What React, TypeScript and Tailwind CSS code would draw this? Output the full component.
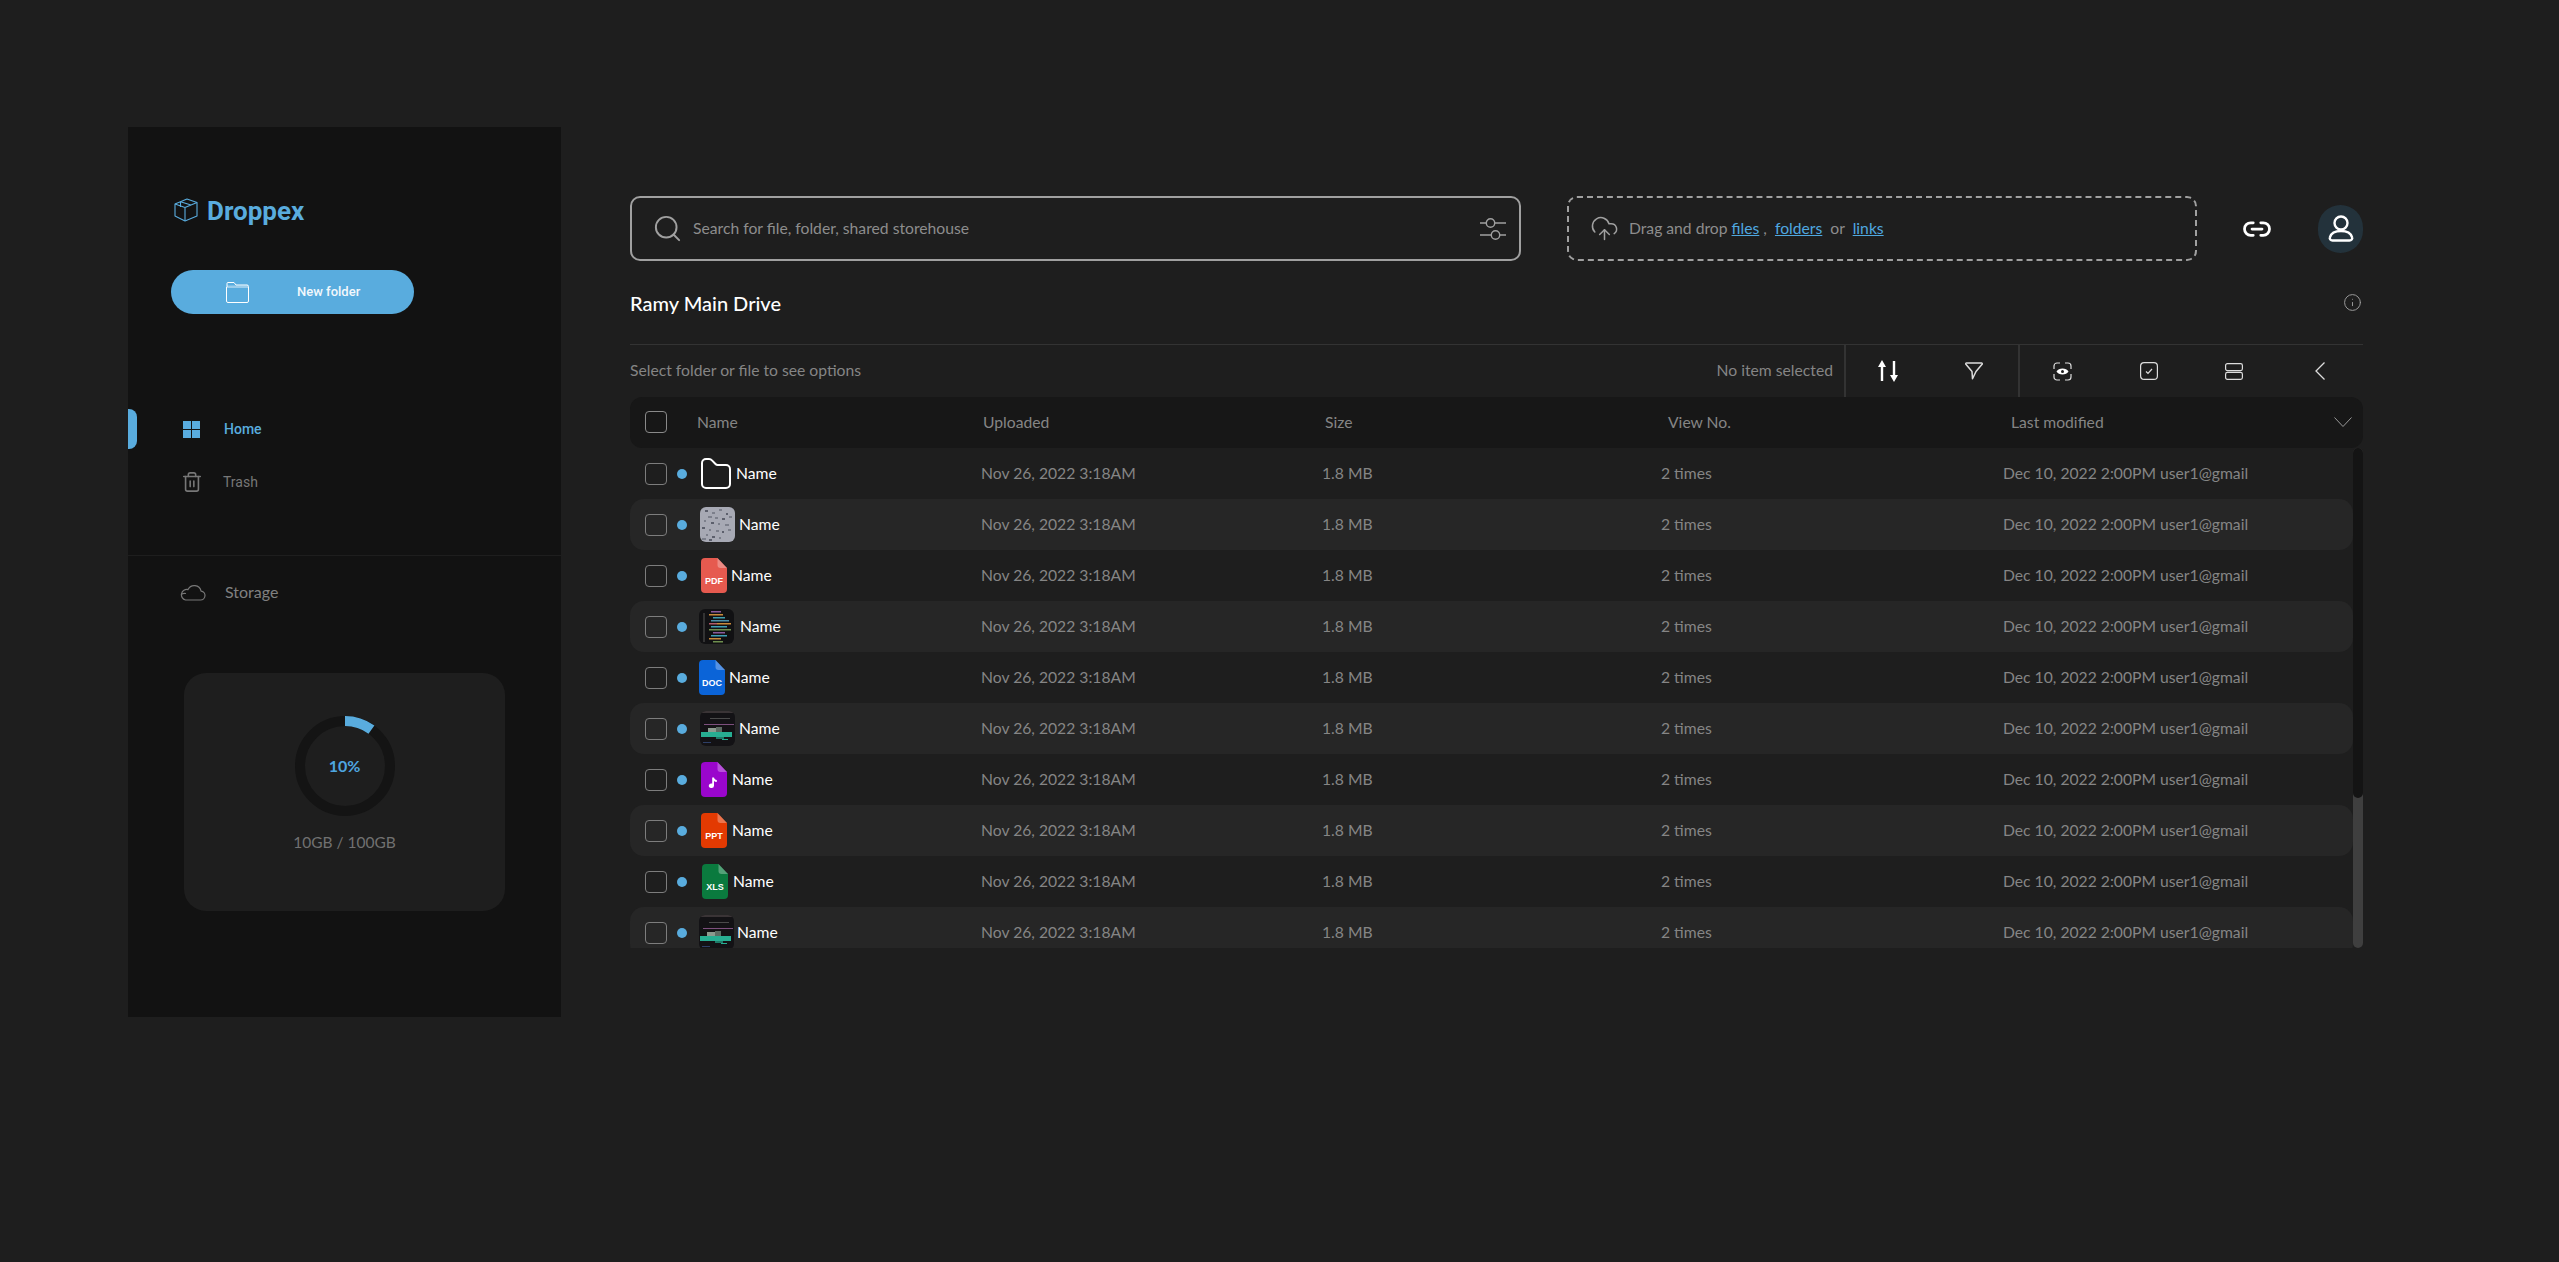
import React from "react";
import { CloudUpload, Info, Link2, Search, Trash2 } from "lucide-react";

const DocIcon = ({ color, label, note }: { color: string; label?: string; note?: boolean }) => (
  <svg width="26" height="35" viewBox="0 0 26 35" className="shrink-0">
    <path d="M4 0H16.5L26 10V31a4 4 0 0 1-4 4H4a4 4 0 0 1-4-4V4a4 4 0 0 1 4-4Z" fill={color} />
    <path d="M16.5 0L26 10H19.5a3 3 0 0 1-3-3Z" fill="#ffffff" fillOpacity="0.3" />
    {label && (
      <text x="13" y="26" textAnchor="middle" fontSize="9" fontWeight="700" fill="#ffffff" fontFamily="Liberation Sans, sans-serif">
        {label}
      </text>
    )}
    {note && <path d="M13 15.5v8.2a2.6 2.2 0 1 1-1.8-2.1v-6.1h1.8c.3 1.6 1.4 2.4 2.8 2.6v1.8c-1.2 0-2.1-.4-2.8-1Z" fill="#ffffff" />}
  </svg>
);

const FolderOutline = () => (
  <svg width="30" height="31" viewBox="0 0 30 31" fill="none" stroke="#ffffff" strokeWidth="2" className="shrink-0">
    <path d="M5 1H8a4 4 0 0 1 3 1.4L14.5 6a3 3 0 0 0 2.2 1H25a4 4 0 0 1 4 4V26a4 4 0 0 1-4 4H5a4 4 0 0 1-4-4V5a4 4 0 0 1 4-4Z" />
  </svg>
);

const dots = [
  [5, 3, 3], [12, 5, 3], [19, 2, 3], [26, 6, 2], [8, 9, 4], [15, 10, 3], [22, 11, 3], [29, 9, 3], [4, 13, 2], [11, 15, 3], [18, 16, 2], [25, 17, 4],
  [2, 20, 3], [9, 22, 2], [16, 23, 3], [22, 24, 2], [28, 22, 3], [6, 27, 2], [12, 29, 3], [19, 30, 2], [2, 31, 4], [9, 32, 3],
];

const IconsThumb = () => (
  <svg width="35" height="35" viewBox="0 0 35 35" className="shrink-0 rounded-[6px]">
    <rect width="35" height="35" fill="#a7a9b4" />
    {dots.map(([x, y, w], i) => (
      <rect key={i} x={x} y={y} width={w} height="2" fill={i % 3 === 0 ? "#5c5f6c" : "#7c7f8b"} />
    ))}
  </svg>
);

const codeLines = [
  [12, 2, 10, "#8a5a9c"], [10, 5, 14, "#c98a3a"], [14, 8, 12, "#3f9db0"], [12, 11, 18, "#4b8fa8"], [10, 14, 8, "#b05a6a"], [18, 14, 14, "#c98a3a"],
  [12, 17, 16, "#3fa0b5"], [10, 20, 22, "#6f8f4f"], [14, 23, 12, "#8a5a9c"], [12, 26, 16, "#3fa0b5"], [10, 29, 12, "#c98a3a"], [14, 32, 10, "#6f8f4f"],
] as const;

const CodeThumb = () => (
  <svg width="35" height="35" viewBox="0 0 35 35" className="shrink-0 rounded-[6px]">
    <rect width="35" height="35" fill="#111113" />
    <rect x="4" y="4" width="2" height="29" fill="#333333" />
    {codeLines.map(([x, y, w, c], i) => (
      <rect key={i} x={x} y={y} width={w} height="1.5" fill={c} />
    ))}
  </svg>
);

const EditorThumb = () => (
  <svg width="35" height="35" viewBox="0 0 35 35" className="shrink-0 rounded-[6px]">
    <rect width="35" height="35" fill="#131215" />
    <rect x="0" y="0" width="35" height="2" fill="#3a3436" />
    <rect x="10" y="7" width="20" height="1" fill="#4a4a4a" />
    <rect x="4" y="13" width="30" height="1" fill="#7d4f7d" />
    <rect x="8" y="17" width="8" height="4" fill="#8d9a8f" />
    <rect x="16" y="16" width="6" height="5" fill="#5d6a62" />
    <rect x="1" y="21" width="31" height="5" fill="#27ae92" />
    <rect x="16" y="26" width="8" height="2" fill="#1e7a68" />
    <rect x="22" y="28" width="6" height="1" fill="#27ae92" />
    <rect x="3" y="31" width="8" height="1" fill="#2e3f66" />
  </svg>
);

const rows = [
  { icon: <FolderOutline />, iconClass: "ml-[14px]", nameClass: "ml-[5px]" },
  { icon: <IconsThumb />, iconClass: "ml-[13px]", nameClass: "ml-[4px]" },
  { icon: <DocIcon color="#e65a4f" label="PDF" />, iconClass: "ml-[14px]", nameClass: "ml-[4px]" },
  { icon: <CodeThumb />, iconClass: "ml-[12px]", nameClass: "ml-[6px]" },
  { icon: <DocIcon color="#0b64d8" label="DOC" />, iconClass: "ml-[12px]", nameClass: "ml-[4px]" },
  { icon: <EditorThumb />, iconClass: "ml-[13px]", nameClass: "ml-[4px]" },
  { icon: <DocIcon color="#9a06cc" note />, iconClass: "ml-[14px]", nameClass: "ml-[5px]" },
  { icon: <DocIcon color="#e33a02" label="PPT" />, iconClass: "ml-[14px]", nameClass: "ml-[5px]" },
  { icon: <DocIcon color="#0a7a3e" label="XLS" />, iconClass: "ml-[15px]", nameClass: "ml-[5px]" },
  { icon: <EditorThumb />, iconClass: "ml-[12px]", nameClass: "ml-[3px]" },
];

const ToolIcon = ({ children }: { children: React.ReactNode }) => (
  <div className="w-[86px] flex items-center justify-center">{children}</div>
);

const Sidebar = () => (
  <aside className="w-[433px] h-[890px] shrink-0 bg-[#121212] flex flex-col font-['Roboto',sans-serif]">
    <div className="flex items-center mt-[71px] ml-[46px] h-[24px]">
      <svg width="24" height="24" viewBox="0 0 24 24" fill="none" stroke="#59acde" strokeWidth="1.1" strokeLinejoin="round">
        <path d="M1 6L13 1L23 4.5V18L11 23L1 18Z" />
        <path d="M1 6L11 9.5V23M11 9.5L23 4.5M6.5 3.8L17 7" />
        <path d="M6.5 3.8V9" />
      </svg>
      <span className="ml-[9px] pt-[2px] text-[26px] font-bold leading-none text-[#59acde]">Droppex</span>
    </div>

    <button className="mt-[48px] ml-[43px] w-[243px] h-[44px] rounded-full bg-[#59acde] flex items-center">
      <svg width="23" height="21" viewBox="0 0 23 21" fill="none" stroke="#ffffff" strokeWidth="1" className="ml-[55px]">
        <path d="M1 5V1.5a1 1 0 0 1 1-1H8L10 3H21a1.5 1.5 0 0 1 1.5 1.5V19a1.5 1.5 0 0 1-1.5 1.5H2A1.5 1.5 0 0 1 .5 19V5" />
        <rect x="1" y="3.5" width="21" height="2.5" fill="#ffffff" fillOpacity="0.4" stroke="none" />
      </svg>
      <span className="ml-[48px] text-[13px] font-medium text-[#f2f8fc]">New folder</span>
    </button>

    <div className="relative mt-[95px] h-[40px] flex items-center">
      <span className="absolute left-0 top-0 w-[9px] h-[40px] rounded-r-[8px] bg-[#59acde]" />
      <svg width="17" height="17" viewBox="0 0 17 17" fill="#59acde" className="ml-[55px]">
        <rect width="8" height="8" />
        <rect x="9" width="8" height="8" />
        <rect y="9" width="8" height="8" />
        <rect x="9" y="9" width="8" height="8" />
      </svg>
      <span className="ml-[24px] text-[14px] font-medium text-[#59acde]">Home</span>
    </div>
    <div className="mt-[13px] h-[40px] flex items-center">
      <Trash2 size={22} strokeWidth={1.75} className="ml-[53px] text-[#777777]" />
      <span className="ml-[20px] text-[14px] text-[#777777]">Trash</span>
    </div>

    <div className="mt-[53px] border-t border-[#1e1e1e]" />

    <div className="mt-[26px] h-[20px] flex items-center font-['Lato',sans-serif]">
      <svg width="26" height="17" viewBox="0 0 26 17" fill="none" stroke="#777777" strokeWidth="1.2" className="ml-[52px]">
        <path d="M5.5 16h15a4.5 4.5 0 0 0 .6-8.96A7 7 0 0 0 8 5.6 5.3 5.3 0 0 0 5.5 16Z" />
        <path d="M1 11c1-1.500 3-2 5-1.500" />
      </svg>
      <span className="ml-[19px] text-[16px] text-[#808080]">Storage</span>
    </div>

    <div className="mt-[71px] ml-[56px] w-[321px] h-[238px] rounded-[22px] bg-[#1e1e1e] flex flex-col items-center font-['Lato',sans-serif]">
      <div className="relative mt-[43px] w-[100px] h-[100px]">
        <svg width="100" height="100" viewBox="0 0 100 100" fill="none" className="-rotate-90">
          <circle cx="50" cy="50" r="45" stroke="#141414" strokeWidth="10" />
          <circle cx="50" cy="50" r="45" stroke="#59acde" strokeWidth="10" strokeDasharray="28.27 282.7" />
        </svg>
        <span className="absolute inset-0 flex items-center justify-center text-[16px] font-bold text-[#4ea6e0]">10%</span>
      </div>
      <span className="mt-[15px] text-[15.5px] leading-[22px] text-[#717171]">10GB / 100GB</span>
    </div>
  </aside>
);

const App = () => {
  return (
    <div className="min-h-screen w-full bg-[#1e1e1e] pt-[127px] pl-[128px] flex items-start font-['Lato',sans-serif]">
      <Sidebar />
      <main className="ml-[69px] w-[1733px] pt-[69px]">
        <div className="flex items-center h-[65px]">
          <div className="w-[891px] h-[65px] shrink-0 rounded-[10px] border-2 border-[#a0a0a0] flex items-center">
            <Search size={31} strokeWidth={1.5} className="ml-[20px] text-[#a0a0a0]" />
            <span className="ml-[10px] text-[15.7px] text-[#8d8d8d]">Search for file, folder, shared storehouse</span>
            <svg width="26" height="26" viewBox="0 0 26 26" fill="none" stroke="#a0a0a0" strokeWidth="1.4" className="ml-auto mr-[13px]">
              <path d="M0 7H6M15 7H26M0 19H11M20 19H26" />
              <circle cx="10.500" cy="7" r="4.200" />
              <circle cx="15.500" cy="19" r="4.200" />
            </svg>
          </div>
          <div className="ml-[46px] w-[630px] h-[65px] shrink-0 rounded-[10px] border-2 border-dashed border-[#a0a0a0] flex items-center text-[15.7px] text-[#8d8d8d]">
            <CloudUpload size={29} strokeWidth={1.25} className="ml-[21px] text-[#a0a0a0]" />
            <span className="ml-[10px] whitespace-pre">
              Drag and drop <a className="text-[#4fa8e0] underline">files</a> ,  <a className="text-[#4fa8e0] underline">folders</a>  or  <a className="text-[#4fa8e0] underline">links</a>
            </span>
          </div>
          <Link2 size={30} strokeWidth={2.2} className="ml-[45px] shrink-0 text-white" />
          <div className="ml-[46px] w-[45px] h-[48px] shrink-0 rounded-full bg-[#23323b] flex items-center justify-center">
            <svg width="26" height="27" viewBox="0 0 26 27" fill="none" stroke="#ffffff" strokeWidth="2.4">
              <circle cx="13" cy="8" r="6.500" />
              <path d="M4.500 25.500h17c1.800 0 3.200-1.500 2.600-3.200-1.200-4-5.500-6.300-11.100-6.300S3.100 18.300 1.900 22.300c-.6 1.700.8 3.200 2.600 3.200Z" />
            </svg>
          </div>
        </div>

        <div className="h-[84px] flex items-center justify-between border-b border-[#333333]">
          <h1 className="text-[20px] font-medium text-white">Ramy Main Drive</h1>
          <Info size={19} strokeWidth={1.25} className="mr-[1px] text-[#999999]" />
        </div>

        <div className="h-[52px] flex items-stretch">
          <span className="self-center text-[15.7px] text-[#858585]">Select folder or file to see options</span>
          <span className="self-center ml-auto mr-[11px] text-[15.7px] text-[#858585]">No item selected</span>
          <div className="w-[174px] border-l-2 border-[#333333] flex">
            <ToolIcon>
              <svg width="22" height="22" viewBox="0 0 22 22" fill="#ffffff" className="mr-[2px]">
                <path d="M5 0L9 7H6.200V21H3.800V7H1Z" />
                <path d="M17 22L13 15H15.800V1H18.200V15H21Z" />
              </svg>
            </ToolIcon>
            <ToolIcon>
              <svg width="18" height="18" viewBox="0 0 18 18" fill="none" stroke="#dddddd" strokeWidth="1.5" strokeLinejoin="round" className="mr-[3px]">
                <path d="M1.500 1H16.500a.8.8 0 0 1 .6 1.300L11 9.500 7.500 16.800 7 9.500 .9 2.300A.8.8 0 0 1 1.500 1Z" />
              </svg>
            </ToolIcon>
          </div>
          <div className="w-[345px] border-l-2 border-[#333333] flex">
            <ToolIcon>
              <svg width="19" height="19" viewBox="0 0 19 19" fill="none" stroke="#dddddd" strokeWidth="1.2">
                <path d="M1 7V4a3 3 0 0 1 3-3H7M12 1H15a3 3 0 0 1 3 3V7M18 12V15a3 3 0 0 1-3 3H12M7 18H4a3 3 0 0 1-3-3V12" />
                <path d="M3.500 9.500C5.500 5.500 13.500 5.500 15.500 9.500 13.500 13.500 5.500 13.500 3.500 9.500Z" fill="#ffffff" stroke="none" />
                <circle cx="9.500" cy="9.500" r="1.500" fill="#1e1e1e" stroke="none" />
              </svg>
            </ToolIcon>
            <ToolIcon>
              <svg width="18" height="18" viewBox="0 0 18 18" fill="none" stroke="#dddddd" strokeWidth="1.2">
                <rect x=".6" y=".6" width="16.800" height="16.800" rx="3.500" />
                <path d="M6 9.500L8 11.500 12 7" />
              </svg>
            </ToolIcon>
            <ToolIcon>
              <svg width="18" height="17" viewBox="0 0 18 17" fill="none" stroke="#dddddd" strokeWidth="1.2">
                <rect x=".6" y=".6" width="16.800" height="7" rx="1.800" />
                <rect x=".6" y="9.400" width="16.800" height="7" rx="1.800" />
              </svg>
            </ToolIcon>
            <ToolIcon>
              <svg width="10" height="18" viewBox="0 0 10 18" fill="none" stroke="#dddddd" strokeWidth="1.3">
                <path d="M9.500 .5L1 9 9.500 17.500" />
              </svg>
            </ToolIcon>
          </div>
        </div>

        <div className="h-[51px] rounded-[12px] bg-[#171717] grid grid-cols-[353px_342px_343px_343px_1fr] items-center text-[15.7px] text-[#858585]">
          <div className="flex items-center pl-[15px]">
            <span className="w-[22px] h-[22px] rounded-[4px] border border-[#8a8a8a]" />
            <span className="ml-[30px]">Name</span>
          </div>
          <span>Uploaded</span>
          <span>Size</span>
          <span>View No.</span>
          <div className="flex items-center justify-between pr-[11px]">
            <span>Last modified</span>
            <svg width="18" height="10" viewBox="0 0 18 10" fill="none" stroke="#999999" strokeWidth="1">
              <path d="M.5 .5L9 9.500 17.500 .5" />
            </svg>
          </div>
        </div>

        <div className="h-[500px] flex">
          <div className="flex-1 overflow-hidden">
            {rows.map((row, i) => (
              <div
                key={i}
                className={
                  i % 2 === 1
                    ? "h-[51px] shrink-0 rounded-[14px] bg-[#262626] grid grid-cols-[351px_341px_339px_342px_1fr] items-center text-[15.7px] text-[#858585]"
                    : "h-[51px] shrink-0 grid grid-cols-[351px_341px_339px_342px_1fr] items-center text-[15.7px] text-[#858585]"
                }
              >
                <div className="flex items-center pl-[15px]">
                  <span className="w-[22px] h-[22px] shrink-0 rounded-[4px] border border-[#7d7d7d]" />
                  <span className="ml-[10px] w-[10px] h-[10px] shrink-0 rounded-full bg-[#59acde]" />
                  <span className={row.iconClass + " flex"}>{row.icon}</span>
                  <span className={row.nameClass + " text-white"}>Name</span>
                </div>
                <span>Nov 26, 2022 3:18AM</span>
                <span>1.8 MB</span>
                <span>2 times</span>
                <span>Dec 10, 2022 2:00PM user1@gmail</span>
              </div>
            ))}
          </div>
          <div className="w-[10px] h-full rounded-full bg-[#3f3f3f]">
            <div className="h-[350px] rounded-full bg-[#141414]" />
          </div>
        </div>
      </main>
    </div>
  );
};

export default App;
